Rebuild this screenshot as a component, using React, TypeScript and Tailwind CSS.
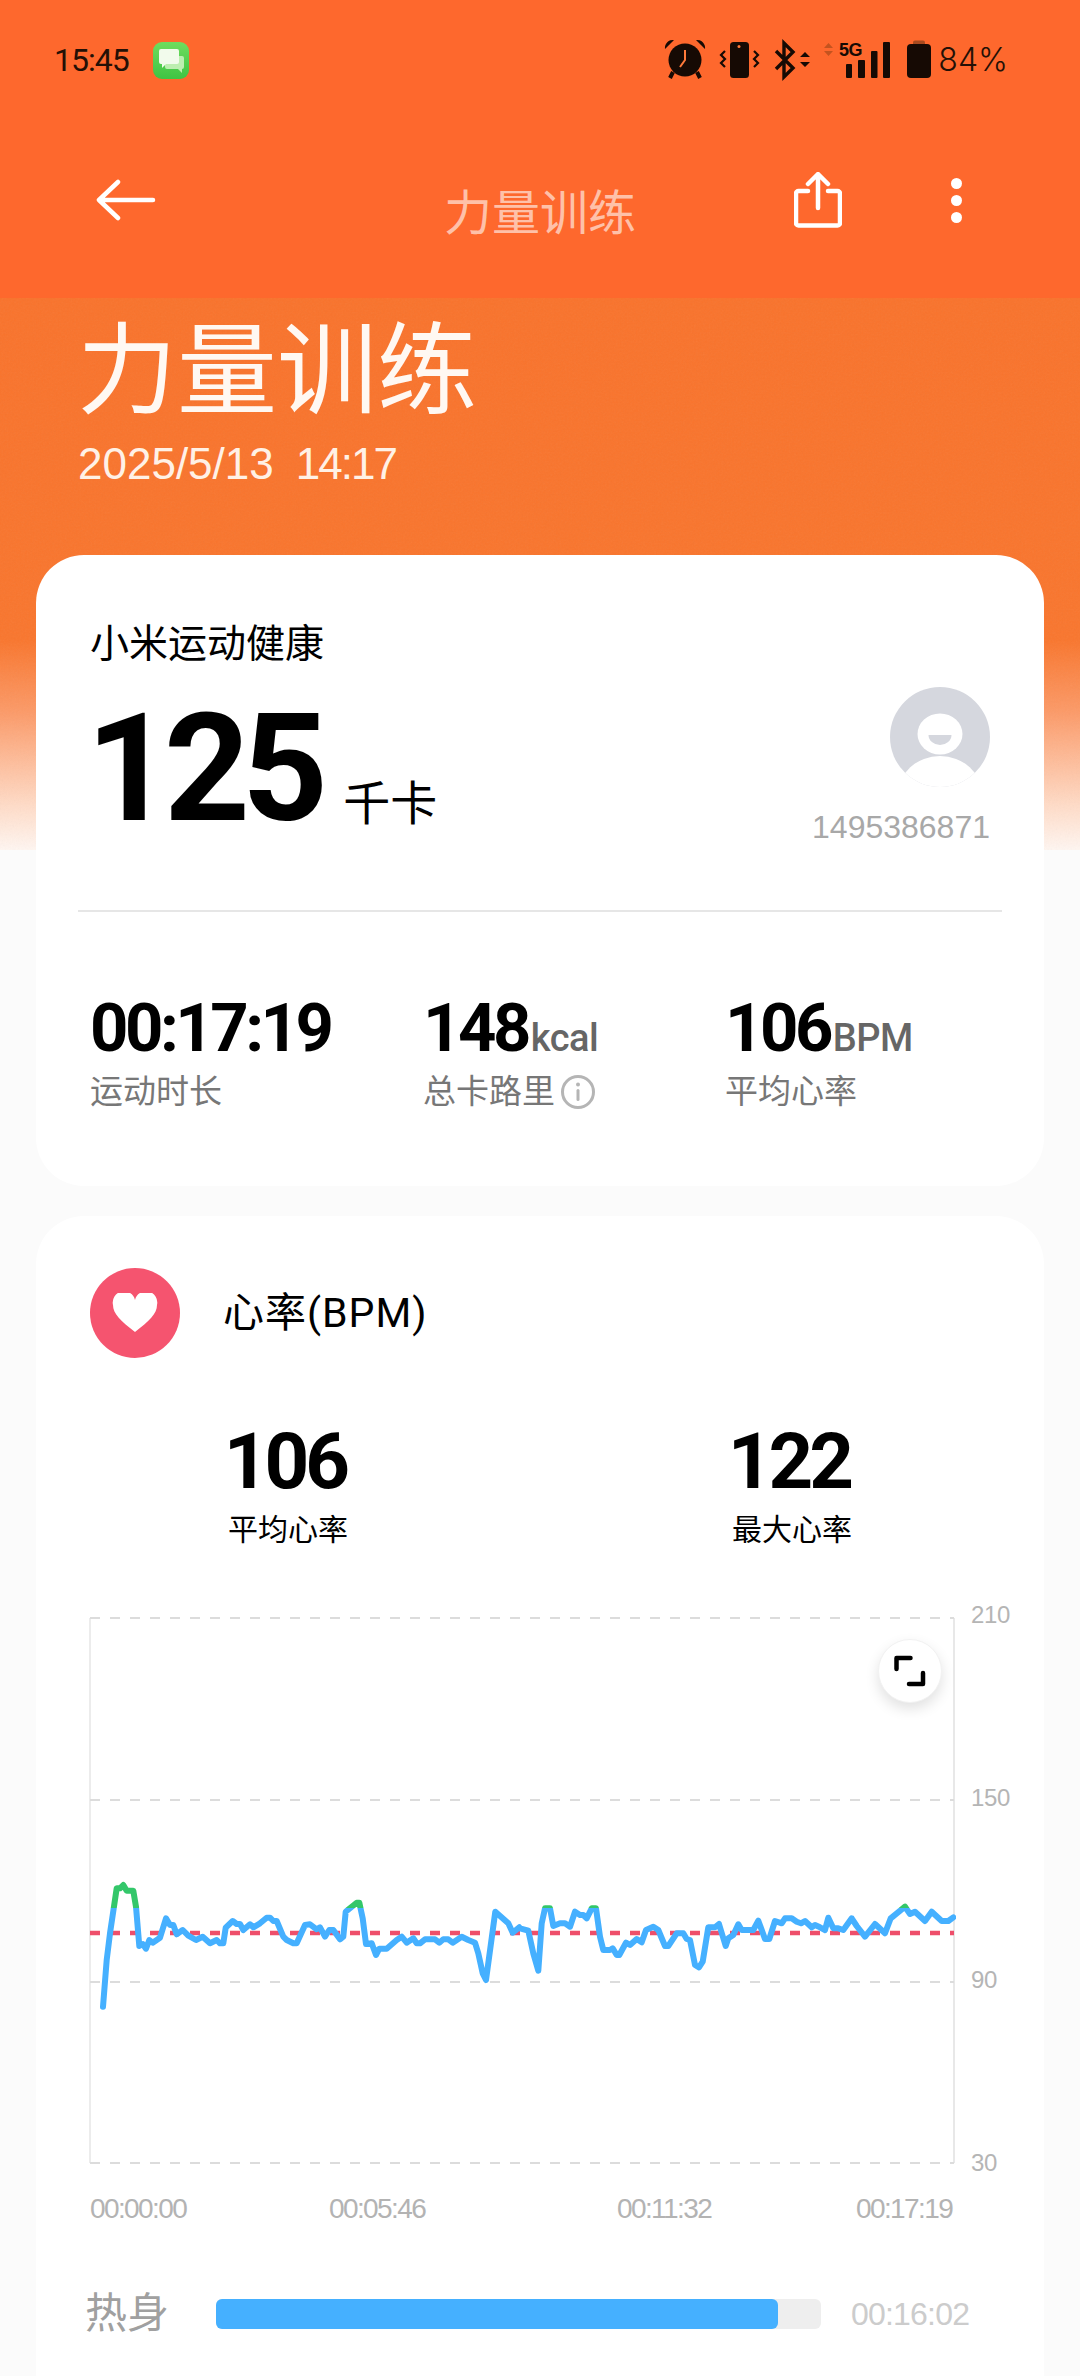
const a: [number, number][] = [[129,500],[140,360],[150,280],[170,145],[180,145],[190,135],[200,152],[220,152],[228,200],[238,318],[248,312],[258,326],[268,300],[278,308],[300,293],[318,235],[330,255],[340,255],[350,283],[368,270],[385,287],[408,300],[428,290],[450,310],[470,300],[480,310],[490,310],[497,263],[518,243],[530,252],[540,252],[550,270],[570,253],[580,262],[600,250],[620,233],[630,233],[640,243],[650,243],[670,290],[680,300],[700,310],[710,310],[735,255],[750,253],[770,268],[780,262],[795,290],[808,270],[820,270],[840,298],[850,290],[857,215],[890,188],[898,188],[908,235],[918,312],[935,310],[948,345],[958,326],[980,326],[1010,300],[1025,290],[1040,308],[1060,295],[1070,310],[1080,310],[1095,298],[1125,298],[1138,308],[1150,298],[1165,298],[1178,308],[1205,290],[1225,300],[1245,308],[1255,340],[1268,400],[1278,420],[1306,215],[1345,250],[1358,278],[1378,262]];
const b: [number, number][] = [[0,265],[25,272],[40,340],[55,392],[65,250],[75,205],[90,205],[100,258],[120,250],[135,250],[150,260],[165,215],[180,225],[190,225],[200,235],[215,205],[228,205],[240,290],[250,330],[270,330],[278,325],[290,345],[298,345],[318,308],[330,315],[350,297],[365,307],[378,270],[400,260],[415,270],[435,318],[445,318],[470,280],[490,280],[500,297],[510,300],[525,375],[537,382],[548,365],[565,262],[585,262],[597,252],[617,318],[625,295],[640,285],[655,253],[665,270],[690,270],[700,270],[715,242],[735,297],[748,297],[765,243],[785,250],[795,235],[815,235],[830,245],[843,250],[855,243],[875,262],[885,255],[900,262],[915,270],[925,233],[940,265],[955,265],[970,270],[995,235],[1010,258],[1035,290],[1065,252],[1095,280],[1112,235],[1155,200],[1170,222],[1185,215],[1215,243],[1235,215],[1265,243],[1285,243],[1300,232]];
const line = [
  ...a.map(([x, y]) => `${(60 + x / 3).toFixed(1)},${(1840 + y / 3).toFixed(1)}`),
  ...b.map(([x, y]) => `${(520 + x / 3).toFixed(1)},${(1840 + y / 3).toFixed(1)}`),
].join(" ");

function Msg() {
  return (
    <svg width="36" height="37" viewBox="0 0 36 37">
      <defs>
        <linearGradient id="m" x1="0" y1="0" x2="0" y2="1">
          <stop offset="0" stopColor="#6fdc5e" />
          <stop offset="1" stopColor="#3fc443" />
        </linearGradient>
      </defs>
      <rect width="36" height="37" rx="9" fill="url(#m)" />
      <path d="M14 14h15a2 2 0 0 1 2 2v9a2 2 0 0 1-2 2v4l-4-4h-11a2 2 0 0 1-2-2v-9a2 2 0 0 1 2-2z" fill="#bdeeb0" />
      <path d="M8 7h16a2 2 0 0 1 2 2v11a2 2 0 0 1-2 2h-11l-4 4v-4h-1a2 2 0 0 1-2-2V9a2 2 0 0 1 2-2z" fill="#f2fbec" />
    </svg>
  );
}

function StatusIcons() {
  const c = "#160a04";
  return (
    <div className="relative w-[270px] h-[44px]">
      <svg width="270" height="44" viewBox="664 37 270 44">
        <path d="M674 39a8 8 0 0 0-9 9zM696 39a8 8 0 0 1 9 9z" fill={c} />
        <circle cx="685" cy="59" r="16.5" fill={c} />
        <path d="M685 49v10l-5 7" stroke="#ff7a3a" strokeWidth="2" fill="none" />
        <path d="M673 71l-3 6M697 71l3 6" stroke={c} strokeWidth="4" />
        <rect x="730" y="41" width="19" height="36" rx="3.5" fill={c} />
        <circle cx="739" cy="45.5" r="1.5" fill="#ff7a3a" />
        <path d="M725 50l-4 4 4 4-4 4 4 4M754 50l4 4-4 4 4 4-4 4" stroke={c} strokeWidth="2.2" fill="none" />
        <path d="M776 50l17 17-9 9V42l9 9-17 17" stroke={c} strokeWidth="3.4" fill="none" />
        <path d="M800 56l5-5 5 5zM800 61h10l-5 5z" fill={c} />
        <path d="M824 47l4.500-5 4.500 5zM824 50h9l-4.500 5z" fill="#c4531f" />
        <rect x="846" y="63" width="6" height="14" rx="1" fill={c} />
        <rect x="858" y="59" width="7" height="18" rx="1" fill={c} />
        <rect x="871" y="50" width="6.500" height="27" rx="1" fill={c} />
        <rect x="883" y="41" width="7" height="36" rx="1" fill={c} />
        <rect x="907" y="43" width="24" height="34" rx="4" fill={c} />
        <path d="M913 43v-1.500a2 2 0 0 1 2-2h8a2 2 0 0 1 2 2V43z" fill="#a84a1f" />
      </svg>
      <span className="absolute left-[175px] top-[3px] text-[18px] leading-[18px] font-bold tracking-[-0.5px] text-[#160a04] font-['Liberation_Sans',sans-serif]">5G</span>
    </div>
  );
}

function Avatar() {
  return (
    <svg width="100" height="100" viewBox="0 0 100 100">
      <defs>
        <clipPath id="av"><circle cx="50" cy="50" r="50" /></clipPath>
      </defs>
      <g clipPath="url(#av)">
        <rect width="100" height="100" fill="#d5d7de" />
        <ellipse cx="50" cy="47" rx="22.500" ry="20.500" fill="#fff" />
        <path d="M38.500 48h23a11.500 10 0 0 1-23 0z" fill="#d5d7de" />
        <ellipse cx="50" cy="107" rx="42" ry="38" fill="#fff" />
      </g>
    </svg>
  );
}

function Stat({ value, unit, label, info }: { value: string; unit?: string; label: string; info?: boolean }) {
  return (
    <div className="flex flex-col">
      <div className="flex items-baseline h-[62px]">
        <span className="text-[67px] leading-[62px] font-bold tracking-[-3.5px] text-black">{value}</span>
        {unit && <span className="text-[38px] leading-[62px] font-medium tracking-[-0.5px] text-[#666] ml-[3px]">{unit}</span>}
      </div>
      <div className="flex items-center mt-[13px] h-[40px] text-[33px] leading-[40px] text-[#777]">
        {label}
        {info && (
          <svg className="ml-[5px]" width="36" height="36" viewBox="0 0 36 36">
            <circle cx="18" cy="18" r="15.500" fill="none" stroke="#b5b5b5" strokeWidth="3" />
            <circle cx="18" cy="10.500" r="2" fill="#b5b5b5" />
            <rect x="16.500" y="15" width="3" height="12" rx="1.500" fill="#b5b5b5" />
          </svg>
        )}
      </div>
    </div>
  );
}

function Chart() {
  const grid = "#dcdcdc";
  return (
    <div className="relative w-[868px] h-[550px]">
      <svg width="868" height="550" viewBox="88 1616 868 550">
        <defs>
          <clipPath id="top"><rect x="88" y="1616" width="868" height="292" /></clipPath>
          <clipPath id="bot"><rect x="88" y="1908" width="868" height="258" /></clipPath>
        </defs>
        <line x1="90" y1="1618" x2="90" y2="2163" stroke="#e6e6e6" strokeWidth="1.500" />
        <line x1="954" y1="1618" x2="954" y2="2163" stroke="#e0e0e0" strokeWidth="1.500" />
        {[1618, 1800, 1982, 2163].map((y) => (
          <line key={y} x1="90" y1={y} x2="954" y2={y} stroke={grid} strokeWidth="2" strokeDasharray="10 10" />
        ))}
        <line x1="90" y1="1933" x2="954" y2="1933" stroke="#ee4f6b" strokeWidth="4.500" strokeDasharray="10 10" />
        <polyline points={line} clipPath="url(#bot)" fill="none" stroke="#45b0ff" strokeWidth="6" strokeLinejoin="round" strokeLinecap="round" />
        <polyline points={line} clipPath="url(#top)" fill="none" stroke="#33c76a" strokeWidth="6" strokeLinejoin="round" strokeLinecap="round" />
      </svg>
      <div className="absolute left-[790px] top-[23px] w-[64px] h-[64px] rounded-full bg-white border border-[#f2f2f2] shadow-[0_6px_14px_rgba(0,0,0,0.12)] flex items-center justify-center">
        <svg width="32" height="32" viewBox="0 0 32 32">
          <path d="M2.500 14V3h14M29 18v11H15" fill="none" stroke="#000" strokeWidth="4.500" strokeLinecap="round" strokeLinejoin="round" />
        </svg>
      </div>
    </div>
  );
}

export default function App() {
  return (
    <div className="relative w-[1080px] h-[2376px] overflow-hidden bg-[#fbfbfb] font-['Roboto','Noto_Sans_CJK_SC',sans-serif]">
      <div className="h-[298px] bg-[#fe682d] flex flex-col">
        <div className="h-[120px] pl-[54px] pr-[72px] flex items-center justify-between">
          <div className="flex items-center">
            <span className="text-[32px] tracking-[-1px] text-[#241006] w-[99px]">15:45</span>
            <Msg />
          </div>
          <div className="flex items-center">
            <StatusIcons />
            <span className="w-[74px] text-right text-[32px] font-light text-[#241006] font-['Inter','Roboto',sans-serif]">84%</span>
          </div>
        </div>
        <div className="relative mt-[40px] h-[100px] flex items-center justify-between pl-[96px] pr-[118px]">
          <svg width="60" height="42" viewBox="0 0 60 42" className="-mt-[20px]">
            <path d="M22 3L3 21l19 18M3 21h54" fill="none" stroke="#fff" strokeWidth="4.500" strokeLinecap="round" strokeLinejoin="round" />
          </svg>
          <span className="absolute left-0 right-0 top-[24px] text-center text-[48px] leading-[60px] text-white/60">力量训练</span>
          <div className="flex items-center gap-[109px] -mt-[20px]">
            <svg width="48" height="56" viewBox="0 0 48 56">
              <path d="M14 19H4.500a2.500 2.500 0 0 0-2.500 2.500V51a2.500 2.500 0 0 0 2.500 2.500h39a2.500 2.500 0 0 0 2.500-2.500V21.500a2.500 2.500 0 0 0-2.500-2.500H34" fill="none" stroke="#fff" strokeWidth="4.500" strokeLinecap="round" />
              <path d="M24 36V3M14 12l10-10 10 10" fill="none" stroke="#fff" strokeWidth="4.500" strokeLinecap="round" strokeLinejoin="round" />
            </svg>
            <div className="flex flex-col gap-[6px]">
              <span className="w-[11px] h-[11px] rounded-full bg-white" />
              <span className="w-[11px] h-[11px] rounded-full bg-white" />
              <span className="w-[11px] h-[11px] rounded-full bg-white" />
            </div>
          </div>
        </div>
      </div>

      <div className="relative h-[552px] pl-[78px] bg-[linear-gradient(to_bottom,#f9732c_0%,#f9762e_62%,#fc9a68_75%,#ffdcc8_92%,#fff6f1_100%)]">
        <svg className="absolute inset-0 opacity-[0.06] pointer-events-none" width="1080" height="552">
          <filter id="n"><feTurbulence type="fractalNoise" baseFrequency="0.55" numOctaves="3" /><feColorMatrix type="saturate" values="0" /></filter>
          <rect width="1080" height="552" filter="url(#n)" />
        </svg>
        <div className="relative pt-[15px] -ml-[1px] text-[100px] leading-[118px] text-[#fff8f2]">力量训练</div>
        <div className="relative flex mt-[8px] text-[44px] leading-[50px] text-[#fff1e6] font-['Liberation_Sans',sans-serif]">
          <span>2025/5/13</span>
          <span className="ml-[22px] tracking-[-2px]">14:17</span>
        </div>
      </div>

      <div className="relative -mt-[295px] mx-[36px] h-[631px] rounded-[48px] bg-white pt-[68px] pl-[54px]">
        <div className="text-[39px] leading-[42px] text-black">小米运动健康</div>
        <div className="flex items-baseline mt-[40px] h-[128px] -ml-[4px]">
          <span className="text-[150px] leading-[128px] font-bold tracking-[-8px] text-black">125</span>
          <span className="text-[47px] leading-[50px] text-black ml-[23px]">千卡</span>
        </div>
        <div className="absolute right-[54px] top-[132px] flex flex-col items-end">
          <Avatar />
          <span className="mt-[21px] text-[32px] leading-[38px] text-[#a8a8a8] font-['Liberation_Sans',sans-serif]">1495386871</span>
        </div>
        <div className="mt-[77px] -ml-[12px] mr-[42px] h-[2px] bg-[#e6e6e6]" />
        <div className="flex mt-[85px]">
          <div className="w-[333px]"><Stat value="00:17:19" label="运动时长" /></div>
          <div className="w-[302px]"><Stat value="148" unit="kcal" label="总卡路里" info /></div>
          <Stat value="106" unit="BPM" label="平均心率" />
        </div>
      </div>

      <div className="relative mt-[30px] mx-[36px] h-[1300px] rounded-[48px] bg-white">
        <div className="flex items-center pt-[52px] pl-[54px]">
          <div className="w-[90px] h-[90px] rounded-full bg-[#f5546f] flex items-center justify-center">
            <svg width="46" height="40" viewBox="0 0 46 40">
              <path d="M23 39C9 28 1 21 1 12A11 11 0 0 1 23 7a11 11 0 0 1 22 5c0 9-8 16-22 27z" fill="#fff" />
            </svg>
          </div>
          <span className="ml-[43px] text-[41px] leading-[46px] tracking-[1px] text-black">心率(BPM)</span>
        </div>
        <div className="flex gap-[264px] mt-[62px] pl-[132px]">
          {[["106", "平均心率"], ["122", "最大心率"]].map(([v, l]) => (
            <div key={l} className="w-[240px] flex flex-col items-center">
              <span className="mr-[6px] text-[78px] leading-[84px] font-bold tracking-[-4px] text-black">{v}</span>
              <span className="mt-[7px] text-[30px] leading-[38px] text-black">{l}</span>
            </div>
          ))}
        </div>
        <div className="flex mt-[67px] pl-[52px]">
          <Chart />
          <div className="ml-[15px] -mt-[16px] h-[578px] flex flex-col justify-between text-[24px] leading-[30px] tracking-[-0.3px] text-[#b5b5b5] font-['Liberation_Sans',sans-serif]">
            <span>210</span><span>150</span><span>90</span><span>30</span>
          </div>
        </div>
        <div className="flex mt-[14px] ml-[54px] text-[28px] leading-[34px] tracking-[-1.6px] text-[#b3b3b3] font-['Liberation_Sans',sans-serif]">
          <span className="w-[239px]">00:00:00</span><span className="w-[288px]">00:05:46</span><span className="w-[239px]">00:11:32</span><span>00:17:19</span>
        </div>
        <div className="flex items-center mt-[63px] ml-[49px]">
          <span className="w-[131px] text-[42px] leading-[50px] text-[#a0a0a0]">热身</span>
          <div className="w-[605px] h-[30px] rounded-[6px] bg-[#eeeeee]">
            <div className="w-[562px] h-full rounded-[6px] bg-[#45b0ff]" />
          </div>
          <span className="ml-[30px] text-[32px] tracking-[-0.8px] text-[#cccccc] font-['Liberation_Sans',sans-serif]">00:16:02</span>
        </div>
      </div>
    </div>
  );
}
